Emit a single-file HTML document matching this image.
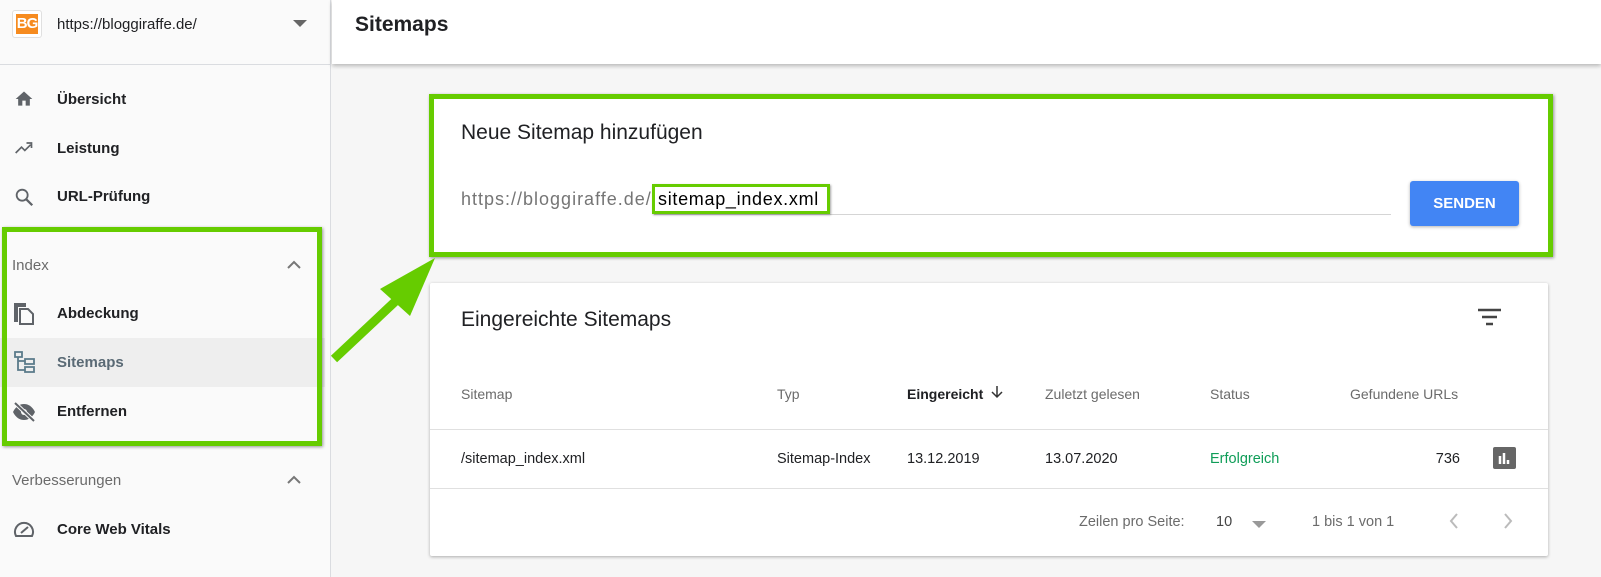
<!DOCTYPE html>
<html><head><meta charset="utf-8"><style>
*{margin:0;padding:0;box-sizing:border-box}
body{width:1601px;height:577px;overflow:hidden;background:#f6f6f6;font-family:"Liberation Sans",sans-serif;position:relative;color:#202124}
.a{position:absolute;white-space:nowrap}
#side{position:absolute;left:0;top:0;width:331px;height:577px;background:#fafafa;border-right:1px solid #dadce0}
.nav{font-size:15px;font-weight:bold;color:#202124}
.sec{font-size:15px;color:#6b6b6b}
.card{position:absolute;background:#fff;box-shadow:0 1px 3px rgba(0,0,0,.3)}
.th{font-size:14px;color:#6b6b6b}
.td{font-size:14.5px;color:#202124}
</style></head><body>
<div id="side">
 <div class="a" style="left:12px;top:10px;width:30px;height:28px;border:1px solid #e0e0e0;border-radius:3px;background:#fff"></div>
 <div class="a" style="left:16px;top:14px;width:22px;height:20px;background:#f68b1f;color:#fff;font-size:15px;line-height:20px;text-align:center;font-weight:bold;letter-spacing:-1px">BG</div>
 <div class="a" style="left:57px;top:16px;font-size:15px;color:#202124">https://bloggiraffe.de/</div>
 <svg class="a" style="left:293px;top:20px" width="14" height="8"><path d="M0 0H14L7 7Z" fill="#666"/></svg>
 <div class="a" style="left:0;top:64px;width:331px;height:1px;background:#dadce0"></div>
 <svg class="a" style="left:13px;top:89px" width="22" height="20" viewBox="0 0 24 24"><path d="M10 20v-6h4v6h5v-8h3L12 3 2 12h3v8z" fill="#5f6368"/></svg>
 <div class="a nav" style="left:57px;top:91px">Übersicht</div>
 <svg class="a" style="left:13px;top:138px" width="22" height="20" viewBox="0 0 24 24"><path d="M2 18l7-7 4 4 7-7M15 6h6v6" stroke="#5f6368" stroke-width="2" fill="none"/></svg>
 <div class="a nav" style="left:57px;top:140px">Leistung</div>
 <svg class="a" style="left:13px;top:186px" width="22" height="22" viewBox="0 0 24 24"><circle cx="10" cy="10" r="6" stroke="#5f6368" stroke-width="2" fill="none"/><path d="M14.5 14.5L21 21" stroke="#5f6368" stroke-width="2.5"/></svg>
 <div class="a nav" style="left:57px;top:188px">URL-Prüfung</div>
 <div class="a sec" style="left:12px;top:257px">Index</div>
 <svg class="a" style="left:287px;top:260px" width="14" height="9"><path d="M1 8L7 2l6 6" stroke="#777" stroke-width="2" fill="none"/></svg>
 <svg class="a" style="left:13px;top:302px" width="22" height="24" viewBox="0 0 22 24"><path d="M2 2h10v2H4v15H2zM7 7h8l5 5v10H7z" fill="none" stroke="#5f6368" stroke-width="2"/></svg>
 <div class="a nav" style="left:57px;top:305px">Abdeckung</div>
 <div class="a" style="left:0;top:338px;width:325px;height:49px;background:#eeeeee"></div>
 <svg class="a" style="left:14px;top:351px" width="22" height="24" viewBox="0 0 22 24"><path d="M1 1h7v5H1zM11 8h9v5h-9zM11 16h9v5h-9zM4 6v13h7M4 10h7" fill="none" stroke="#5a7a8a" stroke-width="1.8"/></svg>
 <div class="a nav" style="left:57px;top:354px;color:#5a6a75">Sitemaps</div>
 <svg class="a" style="left:12px;top:402px" width="24" height="20" viewBox="0 0 24 20"><path d="M1 10C4 4 8 2 12 2s8 2 11 8c-3 6-7 8-11 8S4 16 1 10z" fill="#5f6368"/><circle cx="12" cy="10" r="3" fill="#fafafa"/><path d="M3 1l19 18" stroke="#fafafa" stroke-width="4"/><path d="M3 1l19 18" stroke="#5f6368" stroke-width="2"/></svg>
 <div class="a nav" style="left:57px;top:403px">Entfernen</div>
 <div class="a sec" style="left:12px;top:472px">Verbesserungen</div>
 <svg class="a" style="left:287px;top:475px" width="14" height="9"><path d="M1 8L7 2l6 6" stroke="#777" stroke-width="2" fill="none"/></svg>
 <svg class="a" style="left:13px;top:519px" width="22" height="20" viewBox="0 0 22 20"><path d="M3 17A9 9 0 1 1 19 17Z" fill="none" stroke="#5f6368" stroke-width="2"/><path d="M8 14l7-6" stroke="#5f6368" stroke-width="2"/></svg>
 <div class="a nav" style="left:57px;top:521px">Core Web Vitals</div>
</div>
<div class="a" style="left:332px;top:0;width:1269px;height:64px;background:#fff;box-shadow:0 2px 4px rgba(0,0,0,.25)"></div>
<div class="a" style="left:355px;top:13px;font-size:21px;font-weight:bold;color:#202124">Sitemaps</div>

<div class="card" style="left:432px;top:97px;width:1118px;height:156px"></div>
<div class="a" style="left:461px;top:121px;font-size:21px;color:#202124">Neue Sitemap hinzufügen</div>
<div class="a" style="left:461px;top:189px;font-size:18px;color:#757575;letter-spacing:1px">https://bloggiraffe.de/</div>
<div class="a" style="left:658px;top:189px;font-size:18px;color:#000;letter-spacing:0.7px">sitemap_index.xml</div>
<div class="a" style="left:654px;top:214px;width:737px;height:1px;background:#d5d5d5"></div>
<div class="a" style="left:652px;top:184px;width:178px;height:30px;border:3px solid #66cc00;box-shadow:1px 1px 2px rgba(0,0,0,.35)"></div>
<div class="a" style="left:1410px;top:181px;width:109px;height:45px;background:#4285f4;border-radius:3px;box-shadow:0 1px 3px rgba(0,0,0,.3);color:#fff;font-size:15px;font-weight:bold;text-align:center;line-height:45px">SENDEN</div>
<div class="a" style="left:429px;top:94px;width:1124px;height:163px;border:5px solid #66cc00;box-shadow:1px 1px 3px rgba(0,0,0,.4)"></div>
<div class="a" style="left:2px;top:227px;width:320px;height:219px;border:5px solid #66cc00;box-shadow:1px 1px 3px rgba(0,0,0,.4)"></div>
<svg class="a" style="left:320px;top:245px" width="130" height="130"><path d="M14 114L80 52" stroke="#66cc00" stroke-width="9"/><path d="M115 13L60 44L90 71Z" fill="#66cc00"/></svg>

<div class="card" style="left:430px;top:283px;width:1118px;height:273px;border-radius:2px"></div>
<div class="a" style="left:461px;top:308px;font-size:21px;color:#202124">Eingereichte Sitemaps</div>
<svg class="a" style="left:1478px;top:308px" width="24" height="18"><path d="M0 2h23M4 9h15M8 16h7" stroke="#444" stroke-width="2.5"/></svg>
<div class="a th" style="left:461px;top:386px">Sitemap</div>
<div class="a th" style="left:777px;top:386px">Typ</div>
<div class="a th" style="left:907px;top:386px;color:#202124;font-weight:bold">Eingereicht</div>
<svg class="a" style="left:990px;top:385px" width="14" height="14"><path d="M7 1v11M2 7l5 5 5-5" stroke="#333" stroke-width="1.5" fill="none"/></svg>
<div class="a th" style="left:1045px;top:386px">Zuletzt gelesen</div>
<div class="a th" style="left:1210px;top:386px">Status</div>
<div class="a th" style="left:1350px;top:386px">Gefundene URLs</div>
<div class="a" style="left:430px;top:429px;width:1118px;height:1px;background:#e0e0e0"></div>
<div class="a td" style="left:461px;top:451px">/sitemap_index.xml</div>
<div class="a td" style="left:777px;top:451px">Sitemap-Index</div>
<div class="a td" style="left:907px;top:451px">13.12.2019</div>
<div class="a td" style="left:1045px;top:451px">13.07.2020</div>
<div class="a td" style="left:1210px;top:451px;color:#0f9d58">Erfolgreich</div>
<div class="a td" style="left:1420px;top:451px;width:40px;text-align:right">736</div>
<div class="a" style="left:1493px;top:447px;width:23px;height:22px;background:#666;border-radius:2px"></div>
<svg class="a" style="left:1493px;top:447px" width="23" height="22"><path d="M7 9v8M11 6v11M15 13v4" stroke="#fff" stroke-width="2.5"/></svg>
<div class="a" style="left:430px;top:488px;width:1118px;height:1px;background:#e0e0e0"></div>
<div class="a" style="left:1079px;top:514px;font-size:14.5px;color:#6b6b6b">Zeilen pro Seite:</div>
<div class="a" style="left:1216px;top:514px;font-size:14.5px;color:#444">10</div>
<svg class="a" style="left:1252px;top:521px" width="14" height="8"><path d="M0 0h14L7 7z" fill="#999"/></svg>
<div class="a" style="left:1312px;top:514px;font-size:14.5px;color:#6b6b6b">1 bis 1 von 1</div>
<svg class="a" style="left:1449px;top:513px" width="10" height="16"><path d="M8 1L2 8l6 7" stroke="#bbb" stroke-width="2" fill="none"/></svg>
<svg class="a" style="left:1503px;top:513px" width="10" height="16"><path d="M2 1l6 7-6 7" stroke="#bbb" stroke-width="2" fill="none"/></svg>
</body></html>
